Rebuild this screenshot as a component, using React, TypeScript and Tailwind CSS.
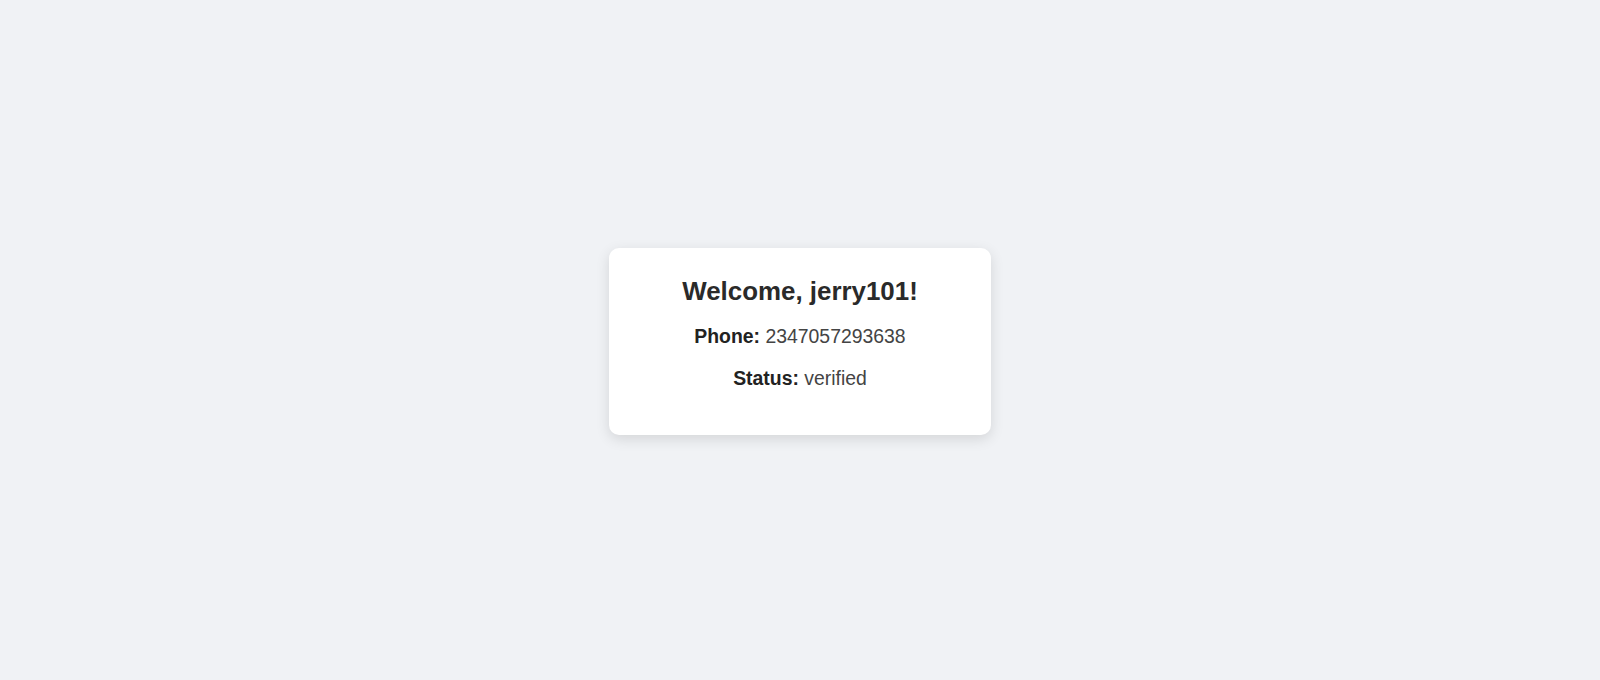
export default function App() {
  return (
    <div
      className="flex min-h-screen items-center justify-center bg-[#f0f2f5] pt-[3px]"
      style={{ fontFamily: '"Liberation Sans", Arial, sans-serif' }}
    >
      {/* Profile card */}
      <div className="w-[382px] rounded-[10px] bg-white px-8 pt-[27.5px] pb-[46px] text-center shadow-[0_4px_14px_rgba(0,0,0,0.12)]">
        <h2 className="text-[25.9px] leading-[30px] font-bold text-[#2a2a2a]">Welcome, jerry101!</h2>
        <p className="mt-[19.5px] text-[19.4px] leading-[22px] text-[#444]">
          <span className="font-bold text-[#222]">Phone:</span> 2347057293638
        </p>
        <p className="mt-[19.7px] text-[19.4px] leading-[22px] text-[#444]">
          <span className="font-bold text-[#222]">Status:</span> verified
        </p>
      </div>
    </div>
  )
}
